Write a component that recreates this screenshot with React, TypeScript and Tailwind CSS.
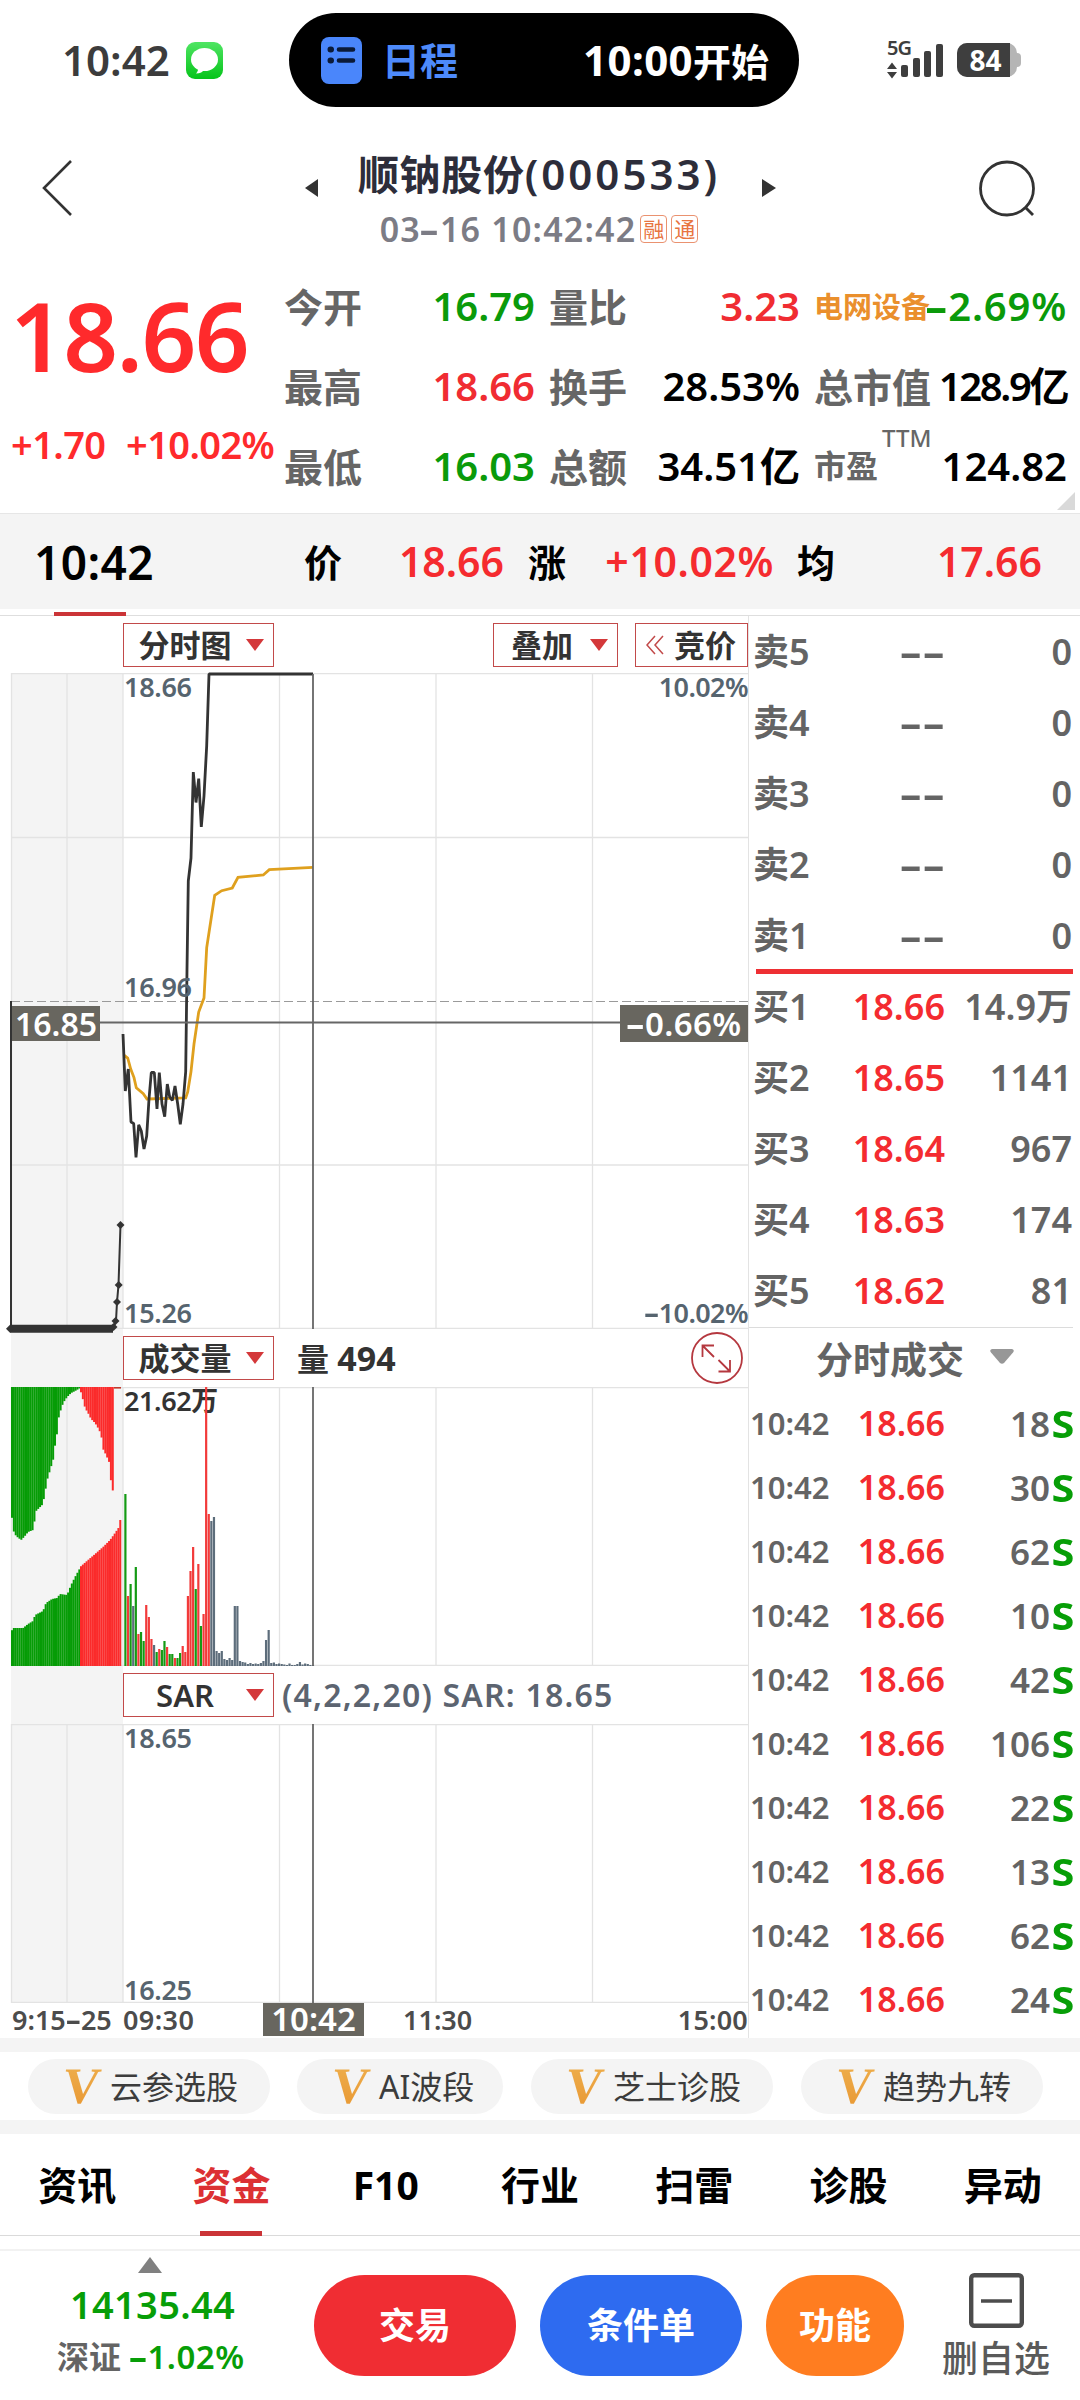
import React from 'react';

type Point = [number, number];

const QUOTES = [
  [
    { label: '今开', value: '16.79', color: 'text-[#0a9a0a]' },
    { label: '最高', value: '18.66', color: 'text-[#f02c32]' },
    { label: '最低', value: '16.03', color: 'text-[#0a9a0a]' },
  ],
  [
    { label: '量比', value: '3.23', color: 'text-[#f02c32]' },
    { label: '换手', value: '28.53%', color: 'text-black' },
    { label: '总额', value: '34.51亿', color: 'text-black' },
  ],
];

const SELLS = ['卖5', '卖4', '卖3', '卖2', '卖1'];

const BUYS = [
  { label: '买1', price: '18.66', volume: '14.9万' },
  { label: '买2', price: '18.65', volume: '1141' },
  { label: '买3', price: '18.64', volume: '967' },
  { label: '买4', price: '18.63', volume: '174' },
  { label: '买5', price: '18.62', volume: '81' },
];

const TRADES = [18, 30, 62, 10, 42, 106, 22, 13, 62, 24];

const TOOLS = ['云参选股', 'AI波段', '芝士诊股', '趋势九转'];

const TABS = ['资讯', '资金', 'F10', '行业', '扫雷', '诊股', '异动'];

const PRICE_LINE =
  '123,1034 125.3,1091 128.3,1069 131,1122 133.7,1123.5 136,1157.5 138.7,1124.8 141.3,1131 144,1149 146.7,1136 149,1099 151.3,1072.5 154.3,1072.5 157,1109 159.3,1072.5 162,1104 164.7,1116.6 167.3,1084 169.7,1097 172.3,1100.5 175,1086 177.7,1104 180.3,1124.4 183,1104 185.7,1071.6 187,970 188.3,881 191,858 193.3,772 196,802.5 198.7,778.7 201.3,827 204,796 206.7,745.6 209,674 313,674';

const AVG_LINE =
  '124.3,1055.5 127.7,1058 130.7,1069 134,1077.6 136.3,1087.7 143.3,1093.6 147,1099 185.7,1098 187.7,1092 191,1071.6 194,1044 198.7,1012 204,998 206.7,947.6 214.7,895.3 221.7,890.7 232.3,888 238,877.4 263.3,875 269.3,869.6 313,867.3';

// Auction volume outlines, left of 09:30
const UNMATCHED_GREEN: Point[] = [[11, 1426], [12, 1528], [16, 1536], [21, 1540], [24, 1537], [28, 1532], [33, 1530], [36, 1511], [42, 1505], [44, 1498], [47, 1480], [50, 1470], [53, 1460], [55, 1445], [57, 1433], [58, 1420], [60, 1412], [63, 1403], [67, 1397], [71, 1393], [75, 1391], [80, 1388]];
const UNMATCHED_RED: Point[] = [[80, 1389], [83, 1400], [85, 1408], [88, 1413], [91, 1419], [95, 1423], [98, 1428], [101, 1434], [103, 1449], [106, 1455], [109, 1462], [111, 1482], [113, 1492]];
const MATCHED_GREEN: Point[] = [[11, 1650], [12, 1628], [23, 1628], [28, 1624], [33, 1621], [35, 1615], [43, 1611], [46, 1603], [52, 1599], [57, 1598], [60, 1594], [67, 1595], [71, 1585], [75, 1577], [80, 1568]];
const MATCHED_RED: Point[] = [[80, 1567], [88, 1560], [95, 1554], [103, 1547], [110, 1540], [115, 1533], [119, 1527], [120, 1520], [121, 1520]];

const COLORS: Record<string, string> = { g: '#149a14', r: '#f23a3a', s: '#5d6d7b' };

// One bar per minute: colour and height
const VOLUMES: [string, number][] = [
  ['g', 172], ['r', 70], ['g', 82], ['s', 60], ['g', 99], ['r', 32], ['g', 34], ['g', 25], ['r', 61], ['r', 49],
  ['r', 27], ['s', 21], ['g', 14], ['r', 17], ['g', 16], ['g', 25], ['r', 19], ['g', 12], ['g', 12], ['r', 8],
  ['g', 8], ['g', 13], ['r', 20], ['r', 14], ['r', 70], ['r', 95], ['r', 119], ['g', 77], ['r', 102], ['g', 40],
  ['r', 52], ['r', 279], ['r', 152], ['s', 145], ['s', 149], ['s', 15], ['s', 13], ['s', 15], ['s', 7], ['s', 6],
  ['s', 8], ['s', 6], ['s', 60], ['s', 60], ['s', 5], ['s', 4], ['s', 3.5], ['s', 2], ['s', 3], ['s', 2],
  ['s', 2.5], ['s', 2], ['s', 3], ['s', 5], ['s', 26], ['s', 36], ['s', 3], ['s', 3.5], ['s', 2], ['s', 2.5],
  ['s', 2], ['s', 1.5], ['s', 1], ['s', 2.5], ['s', 1], ['s', 1], ['s', 2], ['s', 4], ['s', 1.5], ['s', 2.5],
  ['s', 2], ['s', 1], ['s', 1],
];

const heightAt = (outline: Point[], x: number) => {
  const i = outline.findIndex(p => p[0] >= x);
  if (i === -1) return outline[outline.length - 1][1];
  if (i === 0) return outline[0][1];
  const [x0, y0] = outline[i - 1];
  const [x1, y1] = outline[i];
  return y0 + ((y1 - y0) * (x - x0)) / (x1 - x0);
};

const AreaBars = ({ outline, base, color }: { outline: Point[]; base: number; color: string }) => {
  const start = outline[0][0];
  const count = Math.ceil((outline[outline.length - 1][0] - start) / 1.87);
  return (
    <g fill={color}>
      {Array.from({ length: count }, (_, i) => {
        const x = start + i * 1.87;
        const y = heightAt(outline, x + 0.9);
        return <rect key={i} x={x} y={Math.min(y, base)} width={2} height={Math.abs(base - y)} />;
      })}
    </g>
  );
};

// Digits with a wide minus sign
const Num = ({ children, className = '' }: { children: string; className?: string }) => (
  <span className={`whitespace-nowrap ${className}`}>
    {children.split(/(-)/).map((part, i) =>
      part === '-' ? (
        <span key={i} className="inline-block w-[0.56em] text-center font-bold">
          <span className="inline-block scale-x-[1.75]">-</span>
        </span>
      ) : (
        part
      )
    )}
  </span>
);

const DownTriangle = ({ className = '' }: { className?: string }) => (
  <svg className={className} width="18" height="12" viewBox="0 0 18 12">
    <path d="M0 0H18L9 12Z" fill="#d4383a" />
  </svg>
);

const Select = ({ children, className = '' }: { children: string; className?: string }) => (
  <div className={`box-border flex h-[44px] items-center justify-end border border-[#c24a4a] bg-white pr-[9px] text-[31px] leading-none text-[#333] ${className}`}>
    <span className="flex-1 text-center">{children}</span>
    <DownTriangle />
  </div>
);

const Grid = ({ top, bottom }: { top: number; bottom: number }) => (
  <g>
    <rect x="11" y={top} width="112" height={bottom - top} fill="#f4f4f4" />
    <g stroke="#e3e3e3" strokeWidth="1.3">
      {[11.5, 67, 123, 279.5, 436, 592.5].map(x => (
        <line key={x} x1={x} x2={x} y1={top} y2={bottom} />
      ))}
      <line x1="11" x2="749" y1={top + 0.7} y2={top + 0.7} />
      <line x1="11" x2="749" y1={bottom - 0.7} y2={bottom - 0.7} />
    </g>
  </g>
);

const StatusBar = () => (
  <div className="flex h-[120px] items-center">
    <span className="ml-[62px] w-[124px] text-[42px] leading-none text-[#3c3c3c]">10:42</span>
    <svg width="37" height="37" viewBox="0 0 37 37">
      <defs>
        <linearGradient id="msg" x1="0" y1="0" x2="0" y2="1">
          <stop offset="0" stopColor="#4fe563" />
          <stop offset="1" stopColor="#06c41a" />
        </linearGradient>
      </defs>
      <rect width="37" height="37" rx="9" fill="url(#msg)" />
      <ellipse cx="18.5" cy="17.5" rx="13.5" ry="11.5" fill="#fff" />
      <path d="M12 25C12.500 28 11.500 30 10 31.500C14 31.500 17 30 18.500 27Z" fill="#fff" />
    </svg>
    <div className="ml-[66px] flex h-[94px] w-[510px] items-center rounded-full bg-black text-[38px] font-bold leading-none text-white">
      <svg className="ml-[32px]" width="41" height="49" viewBox="0 0 41 49">
        <rect y="1" width="41" height="47" rx="8" fill="#4a86fb" />
        <g stroke="#0b1a38" strokeWidth="4.6" strokeLinecap="round">
          <path d="M18 13.500H32M18 24.500H32" />
          <path d="M9.500 13.500H10M9.500 24.500H10" strokeWidth="6" />
        </g>
      </svg>
      <span className="ml-[20px] text-[#4d8afb]">日程</span>
      <span className="ml-auto mr-[30px]">
        <span className="text-[42px] tracking-[0.4px]">10:00</span>开始
      </span>
    </div>
    <svg className="ml-[87px] overflow-visible" width="60" height="40" viewBox="0 0 60 40" fill="#3e3e3e">
      <text x="1" y="15" fontSize="20" textLength="25">5G</text>
      <path d="M1 29L6 22.500L11 29ZM1 32H11L6 38.500Z" />
      <rect x="15" y="25" width="7" height="12" rx="2" />
      <rect x="27" y="18" width="7" height="19" rx="2" />
      <rect x="38" y="11" width="7" height="26" rx="2" />
      <rect x="50" y="4" width="7" height="33" rx="2" />
    </svg>
    <div className="ml-[11px] flex h-[34px] w-[60px] items-center rounded-[10px] bg-[#b5b5b5]">
      <div className="flex h-full w-[53px] items-center justify-center rounded-l-[10px] bg-[#3e3e3e] pl-[4px] text-[28px] font-bold leading-none text-white">84</div>
    </div>
    <div className="h-[14px] w-[4px] rounded-r-full bg-[#b5b5b5]" />
  </div>
);

const Header = () => (
  <div className="flex h-[148px] items-start">
    <svg className="ml-[40px] mt-[38px]" width="34" height="60" viewBox="0 0 34 60" fill="none" stroke="#333" strokeWidth="2.6">
      <path d="M31 3L4 30L31 57" />
    </svg>
    <svg className="ml-[231px] mt-[59px]" width="13" height="18" viewBox="0 0 13 18">
      <path d="M13 0V18L0 9Z" fill="#333" />
    </svg>
    <div className="ml-[4px] mr-[6px] flex w-[434px] flex-col items-center pt-[33px]">
      <h1 className="whitespace-nowrap text-[41px] leading-[42px] tracking-[0.7px] text-[#2d2d3a]">
        顺钠股份<span className="text-[42px] tracking-[3px]">(000533)</span>
      </h1>
      <div className="mt-[17px] flex items-center text-[#7c7c85]">
        <Num className="text-[34px] leading-[34px] tracking-[1.2px]">03-16 10:42:42</Num>
        {['融', '通'].map(tag => (
          <span key={tag} className="ml-[4px] flex h-[28px] w-[27px] items-center justify-center rounded-[4px] border border-[#ea9270] text-[21px] font-normal leading-none text-[#e8743f]">
            {tag}
          </span>
        ))}
      </div>
    </div>
    <svg className="mt-[59px]" width="14" height="18" viewBox="0 0 14 18">
      <path d="M0 0V18L14 9Z" fill="#333" />
    </svg>
    <svg className="ml-auto mr-[43px] mt-[40px]" width="60" height="60" viewBox="0 0 60 60" fill="none" stroke="#333" strokeWidth="2.8">
      <circle cx="30" cy="28.500" r="26.500" />
      <path d="M48 47L56 55" />
    </svg>
  </div>
);

const QuotePanel = () => (
  <div className="relative flex h-[245px]">
    <div className="w-[284px] shrink-0 text-[#ff2a2c]">
      <div className="pl-[10px] pt-[20px] text-[96px] leading-[94px] tracking-[-1.6px]">18.66</div>
      <div className="mt-[42px] flex pl-[11px] text-[38px] leading-[40px] tracking-[-0.6px]">
        <span className="w-[115px]">+1.70</span>
        <span className="whitespace-nowrap">+10.02%</span>
      </div>
    </div>
    {QUOTES.map((column, i) => (
      <div key={i} className="-mt-[2px] mr-[14px] w-[251px] shrink-0">
        {column.map(q => (
          <div key={q.label} className="flex h-[80px] items-center justify-between leading-none">
            <span className="text-[39px] text-[#666]">{q.label}</span>
            <Num className={`text-[40px] ${q.color}`}>{q.value}</Num>
          </div>
        ))}
      </div>
    ))}
    <div className="-mt-[2px] w-[253px] shrink-0 whitespace-nowrap leading-none text-black">
      <div className="flex h-[80px] items-center justify-between">
        <span className="text-[29px] font-bold text-[#ea8f2c]">电网设备</span>
        <Num className="-ml-[9px] text-[40px] tracking-[0.8px] text-[#0a9a0a]">-2.69%</Num>
      </div>
      <div className="flex h-[80px] items-center justify-between">
        <span className="text-[39px] text-[#666]">总市值</span>
        <Num className="text-[40px] tracking-[-2.4px]">128.9亿</Num>
      </div>
      <div className="flex h-[80px] items-center justify-between">
        <span className="text-[32px] text-[#666]">市盈</span>
        <span className="ml-[4px] mr-auto self-start text-[24px] font-medium text-[#666]">TTM</span>
        <Num className="text-[40px]">124.82</Num>
      </div>
    </div>
    <svg className="absolute bottom-[3px] right-[5px]" width="18" height="18" viewBox="0 0 18 18">
      <path d="M18 0V18H0Z" fill="#d9d9d9" />
    </svg>
  </div>
);

const SummaryBar = () => (
  <>
    <div className="flex h-[96px] items-center border-t border-[#e6e6e6] bg-[#f4f4f4] text-[38px] leading-none text-black">
      <span className="w-[304px] pl-[34px] text-[46px] tracking-[0.4px]">10:42</span>
      <span className="w-[38px]">价</span>
      <span className="w-[162px] text-right text-[41px] text-[#f52b2f]">18.66</span>
      <span className="ml-[24px] w-[38px]">涨</span>
      <span className="w-[208px] text-right text-[41px] tracking-[0.6px] text-[#f52b2f]">+10.02%</span>
      <span className="ml-[23px] w-[39px]">均</span>
      <span className="w-[206px] text-right text-[41px] text-[#f52b2f]">17.66</span>
    </div>
    <div className="flex h-[7px] items-end border-b border-[#dedede]">
      <div className="-mb-px ml-[54px] h-[4px] w-[72px] bg-[#cb3437]" />
    </div>
  </>
);

const PriceChart = () => (
  <div className="relative h-[656px] text-[27px] leading-none text-[#56646f]">
    <svg className="absolute inset-0 overflow-visible" width="749" height="656" viewBox="0 673 749 656" fill="none">
      <Grid top={673} bottom={1329} />
      <path d="M11 837.500H749M11 1165H749" stroke="#e3e3e3" strokeWidth="1.300" />
      <path d="M11 1001.500H749" stroke="#9a9a9a" strokeWidth="1.200" strokeDasharray="9 4" />
      <polyline points={AVG_LINE} stroke="#dfa01e" strokeWidth="2.8" />
      <polyline points={PRICE_LINE} stroke="#333" strokeWidth="2.8" strokeLinejoin="bevel" />
      <path d="M11 1001V1329" stroke="#333" strokeWidth="2" />
      <path d="M10 1328.500H113L116 1321L117 1302L118.500 1285L120.500 1225" stroke="#333" strokeWidth="2" />
      <path d="M10 1328.700H113" stroke="#333" strokeWidth="8" />
      {[[10, 1328.7], [113.5, 1327], [115.5, 1321], [117, 1302], [118.7, 1285], [120.5, 1225]].map(([x, y]) => (
        <path key={y} d={`M${x - 4} ${y}L${x} ${y - 4}L${x + 4} ${y}L${x} ${y + 4}Z`} fill="#333" />
      ))}
      <path d="M100 1022.500H621M313 674V1329" stroke="#666" strokeWidth="1.800" />
    </svg>
    <Num className="absolute left-[124px] top-0 tracking-[-0.3px]">18.66</Num>
    <Num className="absolute left-[124px] top-[300px] tracking-[-0.3px]">16.96</Num>
    <Num className="absolute left-[124px] top-[626px] tracking-[-0.3px]">15.26</Num>
    <Num className="absolute right-0 top-0 tracking-[-0.6px]">10.02%</Num>
    <Num className="absolute right-0 top-[626px] tracking-[-0.6px]">-10.02%</Num>
    <div className="absolute left-[12px] top-[333px] flex h-[35px] w-[88px] items-center justify-center bg-[#68665f] text-[32px] text-white">16.85</div>
    <div className="absolute right-0 top-[332px] flex h-[37px] w-[128px] items-center justify-center bg-[#68665f] text-[33px] text-white">
      <Num className="tracking-[0.4px]">-0.66%</Num>
    </div>
  </div>
);

const VolumeChart = () => (
  <div className="relative h-[279px]">
    <svg className="absolute inset-0" width="749" height="279" viewBox="0 1387 749 279">
      <Grid top={1387} bottom={1666} />
      <AreaBars outline={UNMATCHED_GREEN} base={1387} color="#069c06" />
      <AreaBars outline={UNMATCHED_RED} base={1387} color="#fb2b2b" />
      <AreaBars outline={MATCHED_GREEN} base={1666} color="#069c06" />
      <AreaBars outline={MATCHED_RED} base={1666} color="#fb2b2b" />
      <rect x="114" y="1387" width="7" height="1.6" fill="#c0392b" />
    </svg>
    <span className="absolute left-[124px] top-0 text-[27px] leading-none tracking-[-0.4px] text-[#333]">21.62万</span>
    <svg className="absolute inset-0" width="749" height="279" viewBox="0 1387 749 279">
      {VOLUMES.map(([type, height], i) => (
        <rect key={i} x={124.3 + i * 2.605} y={1666 - height} width="2.2" height={height} fill={COLORS[type]} />
      ))}
      <path d="M313 1387V1666" stroke="#666" strokeWidth="1.800" />
    </svg>
  </div>
);

const SarChart = () => (
  <div className="relative h-[279px] text-[27px] leading-none text-[#56646f]">
    <svg className="absolute inset-0" width="749" height="279" viewBox="0 1724 749 279">
      <Grid top={1724} bottom={2003} />
      <path d="M313 1724V2003" stroke="#666" strokeWidth="1.800" />
    </svg>
    <Num className="absolute left-[124px] top-0 tracking-[-0.3px]">18.65</Num>
    <Num className="absolute left-[124px] top-[252px] tracking-[-0.3px]">16.25</Num>
  </div>
);

const ChartColumn = () => (
  <div className="w-[749px] shrink-0 border-r border-[#e3e3e3]">
    <div className="flex h-[57px] pt-[7px]">
      <Select className="ml-[123px] w-[151px]">分时图</Select>
      <Select className="ml-[219px] w-[125px]">叠加</Select>
      <div className="ml-[17px] flex h-[44px] w-[113px] items-center border border-[#c24a4a] pl-[10px] text-[31px] leading-none text-[#333]">
        <svg width="18" height="20" viewBox="0 0 18 20" fill="none" stroke="#c24a4a" strokeWidth="1.5">
          <path d="M9 1L1 10L9 19M17 1L9 10L17 19" />
        </svg>
        <span className="ml-[10px]">竞价</span>
      </div>
    </div>
    <PriceChart />
    <div className="flex h-[58px] items-center">
      <div className="ml-[11px] h-full w-[112px] bg-[#f4f4f4]" />
      <Select className="w-[151px]">成交量</Select>
      <span className="ml-[23px] text-[32px] leading-none text-[#333]">
        量 <span className="text-[34px] font-bold">494</span>
      </span>
      <svg className="ml-auto mr-[5px]" width="52" height="52" viewBox="0 0 52 52" fill="none" stroke="#b5383f" strokeWidth="1.8">
        <circle cx="26" cy="26" r="25" />
        <path d="M23 13.500H11.500V25M11.500 13.500L23 25M27.500 39.500H39V28M39 39.500L27.500 28" />
      </svg>
    </div>
    <VolumeChart />
    <div className="flex h-[58px] items-center">
      <div className="ml-[11px] h-full w-[112px] bg-[#f4f4f4]" />
      <Select className="w-[151px]">SAR</Select>
      <span className="ml-[8px] whitespace-nowrap text-[32px] leading-none tracking-[1.2px] text-[#5c6470]">(4,2,2,20) SAR: 18.65</span>
    </div>
    <SarChart />
    <div className="flex h-[35px] items-start text-[27px] leading-[33px] text-[#4c4c4c]">
      <Num className="w-[111px] pl-[12px]">9:15-25</Num>
      <span className="ml-[12px] w-[140px] tracking-[0.4px]">09:30</span>
      <span className="-mt-px h-[34px] w-[101px] bg-[#68665f] text-center text-[33px] text-white">10:42</span>
      <span className="ml-[39px]">11:30</span>
      <span className="ml-auto tracking-[0.2px]">15:00</span>
    </div>
  </div>
);

const OrderBook = () => (
  <div className="flex-1 leading-none text-[#646464]">
    {SELLS.map(label => (
      <div key={label} className="flex h-[71px] items-center pl-[4px] pr-[8px] text-[36px]">
        <span className="w-[80px]">{label}</span>
        <span className="w-[112px] whitespace-nowrap text-right font-bold">
          <span className="inline-block w-[23px] text-center"><span className="inline-block scale-x-[1.9]">-</span></span>
          <span className="inline-block w-[23px] text-center"><span className="inline-block scale-x-[1.9]">-</span></span>
        </span>
        <span className="flex-1 text-right">0</span>
      </div>
    ))}
    <div className="-mb-[3px] -mt-[2px] ml-[7px] mr-[7px] h-[5px] bg-[#ee2f33]" />
    {BUYS.map(row => (
      <div key={row.label} className="flex h-[71px] items-center pl-[4px] pr-[8px] text-[36px]">
        <span className="w-[80px]">{row.label}</span>
        <span className="w-[112px] text-right text-[#f42b30]">{row.price}</span>
        <span className="flex-1 whitespace-nowrap text-right">{row.volume}</span>
      </div>
    ))}
    <div className="mr-[7px] mt-px h-px bg-[#dcdcdc]" />
    <div className="flex h-[63px] items-center pl-[67px]">
      <span className="text-[37px]">分时成交</span>
      <svg className="ml-[26px] -mt-[6px]" width="24" height="15" viewBox="0 0 24 15">
        <path d="M2 0H22Q25 1 23 3.500L14 14Q12 15.500 10 14L1 3.500Q-1 1 2 0Z" fill="#979797" />
      </svg>
    </div>
    {TRADES.map((volume, i) => (
      <div key={i} className="flex h-[64px] items-center pl-px pr-[6px]">
        <span className="w-[83px] text-[31px]">10:42</span>
        <span className="w-[112px] text-right text-[34px] text-[#f42b30]">18.66</span>
        <span className="flex-1 text-right text-[35px]">{volume}</span>
        <span className="flex w-[24px] justify-end text-[37px] font-bold text-[#079e07]">
          <span className="origin-right scale-x-[1.12]">S</span>
        </span>
      </div>
    ))}
  </div>
);

const ToolPills = () => (
  <div className="flex h-[96px] border-y-[14px] border-[#f4f4f4] pl-[28px] pt-[7px]">
    {TOOLS.map((tool, i) => (
      <div key={tool} className={`flex h-[55px] items-center rounded-full bg-[#f4f4f4] pl-[35px] ${i === 1 ? 'mr-[28px] w-[206px]' : i === 0 ? 'mr-[27px] w-[242px]' : 'mr-[28px] w-[242px]'}`}>
        <span className="w-[38px] -skew-x-[8deg] bg-gradient-to-b from-[#eeb04e] to-[#e8962f] bg-clip-text font-['Liberation_Serif'] text-[51px] font-bold leading-[55px] text-transparent">V</span>
        <span className="ml-[9px] whitespace-nowrap text-[32px] font-normal leading-none text-[#3c3c3c]">{tool}</span>
      </div>
    ))}
  </div>
);

const TabBar = () => (
  <div className="grid h-[102px] grid-cols-7 border-b border-[#dadada] text-[39px] font-bold text-black">
    {TABS.map(tab => (
      <div key={tab} className={`relative flex justify-center pt-[31px] leading-[40px] ${tab === '资金' ? 'text-[#dc3033]' : ''}`}>
        {tab}
        {tab === '资金' && <div className="absolute -bottom-px h-[5px] w-[62px] bg-[#cb3437]" />}
      </div>
    ))}
  </div>
);

const Footer = () => (
  <div className="mt-[13px] flex h-[151px] border-t-2 border-[#f2f2f2] text-[36px] leading-none">
    <div className="w-[314px] shrink-0">
      <svg className="ml-[138px] mt-[6px]" width="24" height="16" viewBox="0 0 24 16">
        <path d="M12 0L24 16H0Z" fill="#808080" />
      </svg>
      <div className="mt-[11px] pl-[70px] text-[38px] leading-[40px] tracking-[0.3px] text-[#079e07]">14135.44</div>
      <div className="mt-[13px] flex items-center pl-[57px] leading-[40px]">
        <span className="text-[32px] text-[#646464]">深证</span>
        <Num className="ml-[8px] text-[33px] tracking-[0.5px] text-[#079e07]">-1.02%</Num>
      </div>
    </div>
    <div className="mt-[24px] flex h-[101px] gap-[24px] font-bold text-white">
      <button className="w-[202px] rounded-full bg-[#f02d33]">交易</button>
      <button className="w-[202px] rounded-full bg-[#2e6bf0]">条件单</button>
      <button className="w-[138px] rounded-full bg-[#ff7d20]">功能</button>
    </div>
    <div className="ml-[38px] flex flex-col items-center pt-[22px] text-[#5a5a5a]">
      <svg width="55" height="55" viewBox="0 0 55 55" fill="none" stroke="#4c4c4c" strokeWidth="4.4">
        <rect x="2.200" y="2.200" width="50.600" height="50.600" rx="3" />
        <path d="M12 28H43" strokeWidth="3.500" />
      </svg>
      <span className="mt-[13px] whitespace-nowrap font-medium">删自选</span>
    </div>
  </div>
);

const App: React.FC = () => {
  return (
    <div className="h-[2400px] w-[1080px] overflow-hidden bg-white font-['Noto_Sans','Noto_Sans_CJK_SC',sans-serif] font-semibold">
      <StatusBar />
      <Header />
      <QuotePanel />
      <SummaryBar />
      <main className="flex h-[1422px]">
        <ChartColumn />
        <OrderBook />
      </main>
      <ToolPills />
      <TabBar />
      <Footer />
    </div>
  );
};

export default App;
